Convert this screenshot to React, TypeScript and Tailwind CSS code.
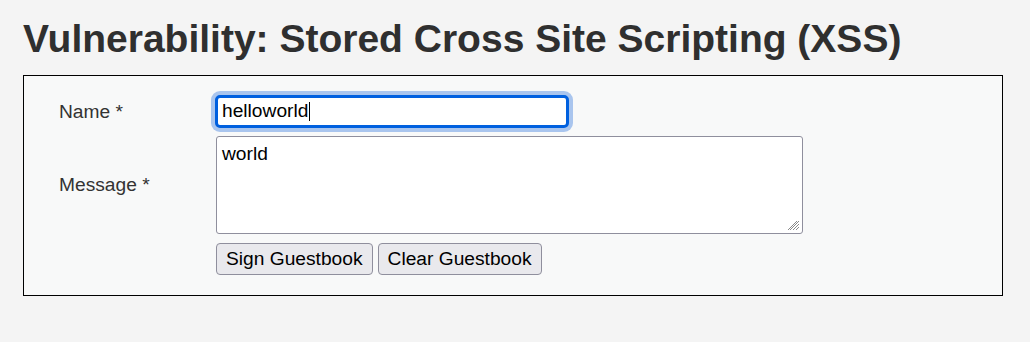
import React from 'react';

const font = "font-['Liberation_Sans',Arial,sans-serif]";

const ResizeGrip = () => (
  <svg className="absolute right-[3px] bottom-[3px]" width="12" height="12" viewBox="0 0 12 12">
    <path d="M11 2 L2 11 M11 5 L5 11 M11 8 L8 11 M9 2 L0 11" stroke="#8a8a8a" strokeWidth="1" fill="none" />
  </svg>
);

const App: React.FC = () => {
  return (
    <div className={`min-h-screen bg-[#f4f4f4] text-[#333] ${font}`}>
      <div className="px-[23px] pt-[20px]">
        <h1 className="text-[39px] font-bold leading-[38px] text-[#2f2f2f]">
          Vulnerability: Stored Cross Site Scripting (XSS)
        </h1>

        <div className="mt-[17px] w-[980px] border border-black bg-[#f8f9f9] pt-[19px] pb-[20px]">
          <div className="flex items-center">
            <div className="w-[191px] pl-[35px] text-[19.2px] leading-[22px]">Name *</div>
            <div className="flex h-[33px] w-[354px] items-center rounded-[5px] border-[3px] border-[#0060df] bg-white pl-[4px] text-[19.2px] text-black shadow-[0_0_0_4px_#a9c5ee]">
              <span>helloworld</span>
              <span className="ml-px inline-block h-[19px] w-px bg-black" />
            </div>
          </div>

          <div className="mt-[8px] flex items-center">
            <div className="w-[192px] pl-[35px] text-[19.2px] leading-[22px]">Message *</div>
            <div className="relative">
              <textarea
                readOnly
                value="world"
                className={`block h-[98px] w-[587px] resize-none rounded-[3px] border border-[#8f8f9d] bg-white pt-[6px] pl-[5px] text-[19.2px] leading-[22px] text-black outline-none ${font}`}
              />
              <ResizeGrip />
            </div>
          </div>

          <div className="mt-[9px] flex gap-[5px] pl-[192px]">
            <button className={`h-[32px] rounded-[4px] border border-[#8f8f9d] bg-[#e9e9ed] px-[9px] text-[19.2px] text-black ${font}`}>
              Sign Guestbook
            </button>
            <button className={`h-[32px] rounded-[4px] border border-[#8f8f9d] bg-[#e9e9ed] px-[9px] text-[19.2px] text-black ${font}`}>
              Clear Guestbook
            </button>
          </div>
        </div>
      </div>
    </div>
  );
};

export default App;
